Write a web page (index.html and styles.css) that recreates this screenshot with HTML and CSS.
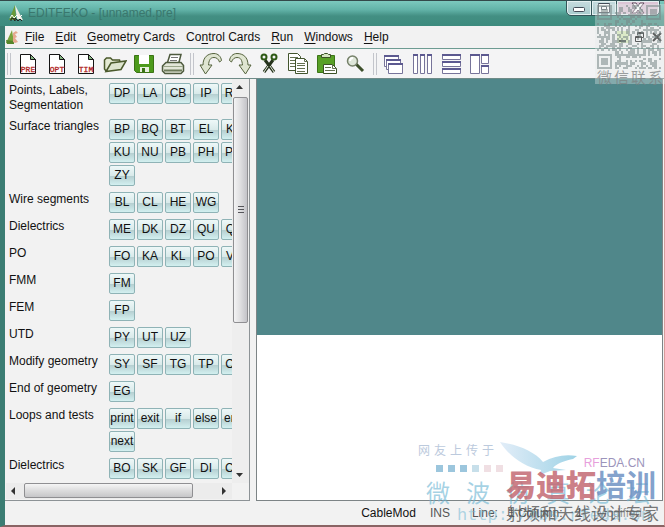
FILE: index.html
```html
<!DOCTYPE html>
<html lang="en">
<head>
<meta charset="utf-8">
<title>EDITFEKO - [unnamed.pre]</title>
<link rel="stylesheet" href="styles.css">
</head>
<body>
<div class="window">
  <header class="titlebar">
    <svg class="app-icon" width="16" height="17" viewBox="0 0 16 17"><path d="M7 0 1 15h7z" fill="#6b9a38"/><path d="M7 0l2 14 6 1z" fill="#f2eee4"/><path d="M2 13l2-3 2 3 3-3 2 3 3-3" fill="none" stroke="#fff"/><path d="M3 16v-2l2-1 2 3v-3l3 3 2-2 2 2" fill="none" stroke="#222"/></svg>
    <span class="caption">EDITFEKO - [unnamed.pre]</span>
    <div class="caption-buttons">
      <button class="cap" aria-label="Minimize"><svg width="14" height="10"><rect x="1.500" y="4.500" width="11" height="4" rx="1" fill="#fff" stroke="#444c58"/></svg></button>
      <button class="cap" aria-label="Maximize"><svg width="14" height="12"><path d="M1.500 1.500h11v9h-11zM4.500 4.500h5v3h-5z" fill="#fff" stroke="#444c58"/></svg></button>
      <button class="cap cap-close" aria-label="Close"><svg width="16" height="12"><path d="M2 1h4l2 3 2-3h4l-4 5 4 5h-4L8 8l-2 3H2l4-5z" fill="#fff" stroke="#5c4a5c"/></svg></button>
    </div>
  </header>
  <nav class="menubar">
    <svg class="doc-icon" width="14" height="15" viewBox="0 0 14 15"><path d="M6 0 0 13h8z" fill="#79a33c"/><path d="M0 10l8 1v3H1z" fill="#55852b"/><path d="M7 3l3-2 2 2-3 1 2 3-2 1 3 4-3 1-2-1z" fill="#e5a98f"/></svg>
    <button class="menu"><u>F</u>ile</button>
    <button class="menu"><u>E</u>dit</button>
    <button class="menu"><u>G</u>eometry Cards</button>
    <button class="menu">Co<u>n</u>trol Cards</button>
    <button class="menu"><u>R</u>un</button>
    <button class="menu"><u>W</u>indows</button>
    <button class="menu"><u>H</u>elp</button>
    <div class="doc-buttons">
      <button class="doc-btn min" aria-label="Minimize document"><svg width="12" height="12"><path d="M2 9h7v2H2z" fill="#253020"/></svg></button>
      <button class="doc-btn" aria-label="Restore document"><svg width="12" height="12"><path d="M3.500 4V1.500h6v5H8M3 2.500h7M1.500 5.500h6v5h-6zM1 6.500h7" fill="none" stroke="#111"/></svg></button>
      <button class="doc-btn" aria-label="Close document"><svg width="12" height="12"><path d="M2 2l8 8M10 2l-8 8" stroke="#111" stroke-width="2"/></svg></button>
    </div>
  </nav>
  <div class="toolbar">
    <i class="grip"></i>
    <button class="tool" aria-label="Open PRE"><svg width="24" height="24"><path d="M4.500 2.500h10l5 5v14h-15z" fill="#fff" stroke="#151515"/><path d="M14.500 2.500v5h5z" fill="#87b883" stroke="#151515"/><text x="12" y="20" class="file-text">PRE</text></svg></button>
    <button class="tool" aria-label="Open OPT"><svg width="24" height="24"><path d="M4.500 2.500h10l5 5v14h-15z" fill="#fff" stroke="#151515"/><path d="M14.500 2.500v5h5z" fill="#87b883" stroke="#151515"/><text x="12" y="20" class="file-text">OPT</text></svg></button>
    <button class="tool" aria-label="Open TIM"><svg width="24" height="24"><path d="M4.500 2.500h10l5 5v14h-15z" fill="#fff" stroke="#151515"/><path d="M14.500 2.500v5h5z" fill="#87b883" stroke="#151515"/><text x="12" y="20" class="file-text">TIM</text></svg></button>
    <button class="tool" aria-label="Open"><svg width="24" height="24"><path d="M3 19L1.500 17V8l2-2h4l2 2h7l1 3" fill="#e4ead3" stroke="#4b5a2c" stroke-width="1.500"/><path d="M3 19.500L8 11l15-2-5 8.500z" fill="#dde4ce" stroke="#4b5a2c" stroke-width="1.500"/></svg></button>
    <button class="tool" aria-label="Save"><svg width="24" height="24"><path d="M2.500 3.500h19v17h-17l-2-2z" fill="#4d9a1c" stroke="#3b7315"/><path d="M7 3h10v9H7z" fill="#fff"/><path d="M8 15h9v5H8z" fill="#e8efe0"/><path d="M10 16h3v4h-3z" fill="#3b7315"/></svg></button>
    <button class="tool" aria-label="Print"><svg width="24" height="24"><path d="M6 12L9 2.500h11L17.500 12" fill="#fff" stroke="#4e5a3e" stroke-width="1.500"/><path d="M10 5.500h7M9 8.500h7" stroke="#777" /><path d="M1.500 14L5 10.500h15l2.500 3V19L20 21.500H4L1.500 19z" fill="#e2e6d8" stroke="#4e5a3e" stroke-width="1.500"/><path d="M2 14.500h20" stroke="#9aa68a"/><path d="M3 18.500h18" stroke="#6c7a5a" stroke-width="2"/></svg></button>
    <i class="grip"></i>
    <button class="tool" aria-label="Undo"><svg width="24" height="24"><path d="M4 13C4 5 9 1.500 15 1.500c4 0 7 3 7.500 7l-2 1.500c-1-3-3-4.500-5.500-4.500-4 0-5 3-5.500 7.500h3.500L6.500 22 1 13z" fill="#dfe5d1" stroke="#55633d"/></svg></button>
    <button class="tool" aria-label="Redo"><svg width="24" height="24"><path d="M20 13C20 5 15 1.500 9 1.500c-4 0-7 3-7.500 7l2 1.500c1-3 3-4.500 5.500-4.500 4 0 5 3 5.500 7.500H11L17.500 22 23 13z" fill="#dfe5d1" stroke="#55633d"/></svg></button>
    <button class="tool" aria-label="Cut"><svg width="24" height="24"><path d="M8 8l9 12M16 8L7 20" stroke="#26331c" stroke-width="3"/><path d="M13 14l4 6M11 14l-4 6" stroke="#e8eee0" /><circle cx="7" cy="5" r="2.500" fill="none" stroke="#2f5a17" stroke-width="2"/><circle cx="17" cy="5" r="2.500" fill="none" stroke="#2f5a17" stroke-width="2"/></svg></button>
    <button class="tool" aria-label="Copy"><svg width="24" height="24"><path d="M2.500 1.500h9l3 3v14h-12z" fill="#fff" stroke="#43552e"/><path d="M4 5.500h8M4 8.500h8M4 11.500h8M4 14.500h8" stroke="#63704f"/><path d="M9.500 6.500h9l3 3v12h-12z" fill="#fff" stroke="#43552e"/><path d="M18.500 6.500v3h3M11 11.500h8M11 13.500h8M11 16.500h8M11 19.500h8" fill="none" stroke="#63704f"/></svg></button>
    <button class="tool" aria-label="Paste"><svg width="24" height="24"><path d="M2.500 3.500h17v17h-17z" fill="#58a026" stroke="#3c7417"/><path d="M6.500 5.500v-3h2l1-1h3l1 1h2v3z" fill="#d5e6c2" stroke="#3c5226"/><path d="M8.500 12.500h9l4 4v5h-13z" fill="#fff" stroke="#3c5226"/><path d="M17.500 12.500v4h4M10 15.500h6M10 18.500h10" fill="none" stroke="#63704f"/></svg></button>
    <button class="tool" aria-label="Find"><svg width="24" height="24"><path d="M12 12l7 7" stroke="#3d4f2b" stroke-width="3"/><circle cx="8.500" cy="9" r="5" fill="#dfe7da" stroke="#76816a" stroke-width="1.500"/><path d="M6 9a3 3 0 0 1 3-3" fill="none" stroke="#fff" stroke-width="2"/></svg></button>
    <i class="grip"></i>
    <button class="tool" aria-label="Cascade"><svg width="24" height="24"><g fill="#fff" stroke="#77749a"><path d="M2.500 3.500h14v11h-14z"/><path d="M4.500 7.500h14v10h-14z"/><path d="M6.500 12.500h14v9h-14z"/></g><path d="M2 4h15M4 8h15M6 12h15" stroke="#5c5990" stroke-width="2"/></svg></button>
    <button class="tool" aria-label="Tile columns"><svg width="24" height="24"><path d="M2.500 3.500h4v18h-4zM9.500 3.500h4v18h-4zM16.500 3.500h4v18h-4z" fill="#fff" stroke="#77749a"/><path d="M2 3h5M9 3h5M16 3h5" stroke="#5c5990" stroke-width="2"/></svg></button>
    <button class="tool" aria-label="Tile rows"><svg width="24" height="24"><path d="M2.500 3.500h18v4h-18zM2.500 10.500h18v4h-18zM2.500 17.500h18v4h-18z" fill="#fff" stroke="#77749a"/><path d="M2 3h19M2 10h19M2 17h19" stroke="#5c5990" stroke-width="2"/></svg></button>
    <button class="tool" aria-label="Tile"><svg width="24" height="24"><path d="M1.500 3.500h9v18h-9zM12.500 3.500h7v8h-7zM12.500 14.500h7v7h-7z" fill="#fff" stroke="#77749a"/><path d="M1 3h10M12 3h8M12 14h8" stroke="#5c5990" stroke-width="2"/></svg></button>
  </div>
  <main class="workspace">
    <aside class="panel">
      <div class="cards">
        <section class="row"><h2>Points, Labels, Segmentation</h2><div class="keys"><button>DP</button><button>LA</button><button>CB</button><button>IP</button><button>RM</button></div></section>
        <section class="row"><h2>Surface triangles</h2><div class="keys"><button>BP</button><button>BQ</button><button>BT</button><button>EL</button><button>KK</button><button>KU</button><button>NU</button><button>PB</button><button>PH</button><button>PM</button><button>ZY</button></div></section>
        <section class="row"><h2>Wire segments</h2><div class="keys"><button>BL</button><button>CL</button><button>HE</button><button>WG</button></div></section>
        <section class="row"><h2>Dielectrics</h2><div class="keys"><button>ME</button><button>DK</button><button>DZ</button><button>QU</button><button>QT</button></div></section>
        <section class="row"><h2>PO</h2><div class="keys"><button>FO</button><button>KA</button><button>KL</button><button>PO</button><button>VS</button></div></section>
        <section class="row"><h2>FMM</h2><div class="keys"><button>FM</button></div></section>
        <section class="row"><h2>FEM</h2><div class="keys"><button>FP</button></div></section>
        <section class="row"><h2>UTD</h2><div class="keys"><button>PY</button><button>UT</button><button>UZ</button></div></section>
        <section class="row"><h2>Modify geometry</h2><div class="keys"><button>SY</button><button>SF</button><button>TG</button><button>TP</button><button>CN</button></div></section>
        <section class="row"><h2>End of geometry</h2><div class="keys"><button>EG</button></div></section>
        <section class="row"><h2>Loops and tests</h2><div class="keys"><button>print</button><button>exit</button><button>if</button><button>else</button><button>end</button><button>next</button></div></section>
        <section class="row"><h2>Dielectrics</h2><div class="keys"><button>BO</button><button>SK</button><button>GF</button><button>DI</button><button>CO</button></div></section>
      </div>
      <div class="vbar">
        <svg width="16" height="16"><path d="M4 10h7L7.500 6z" fill="#333"/></svg>
        <div class="vtrack"><div class="vthumb"><i></i><i></i><i></i></div></div>
        <svg width="16" height="16"><path d="M4 6h7L7.500 10z" fill="#333"/></svg>
      </div>
      <div class="hbar">
        <svg width="16" height="16"><path d="M9 4v8L5 8z" fill="#333"/></svg>
        <div class="htrack"><div class="hthumb"></div></div>
        <svg width="16" height="16"><path d="M6 4v8l4-4z" fill="#333"/></svg>
      </div>
    </aside>
    <section class="editor">
      <div class="mdi"></div>
      <div class="output"></div>
    </section>
  </main>
  <footer class="status">
    <span>CableMod</span><span class="faded">INS</span><span class="faded pos">Line: &nbsp; 1 Column: &nbsp; &nbsp;1</span><span class="modified">Modified</span>
  </footer>
</div>

<div class="qr-mark">
  <svg id="qr" width="64" height="64" viewBox="0 0 29 29" shape-rendering="crispEdges"></svg>
  <div class="spread"><span>微</span><span>信</span><span>联</span><span>系</span></div>
</div>
<div class="brand-mark">
  <svg class="bird" width="84" height="34" viewBox="0 0 84 34"><defs><linearGradient id="wing"><stop offset="0" stop-color="#e2edf8"/><stop offset="1" stop-color="#9fd3e6"/></linearGradient></defs><path d="M0 0c18 3 34 9 43 20 11-6 22-8 34-6l-4 3c-10 2-17 5-20 9l13 2-16 1-10 4 1-5C24 25 9 14 0 0z" fill="url(#wing)"/></svg>
  <div class="upload spread"><span>网</span><span>友</span><span>上</span><span>传</span><span>于</span></div>
  <div class="squares"><i></i><i></i><i></i><i></i><i></i><i></i></div>
  <div class="rfeda"><span>RF</span>EDA.CN</div>
  <div class="script spread"><span>微</span><span>波</span><span>仿</span><span>真</span><span>论</span><span>坛</span></div>
  <div class="url">http://bbs.rfeda.cn</div>
  <div class="train"><b>易迪拓</b>培训</div>
  <div class="slogan">射频和天线设计专家</div>
</div>
<script src="qr.js"></script>
</body>
</html>
```
FILE: styles.css
```css
* { box-sizing: border-box; }
body {
  margin: 0;
  height: 100vh;
  position: relative;
  overflow: hidden;
  font: 12px/15px "Liberation Sans", Arial, sans-serif;
  color: #111;
}
button { font: inherit; color: inherit; border: 0; padding: 0; background: none; }
svg { display: block; flex: none; }
.window {
  height: 100%;
  display: flex;
  flex-direction: column;
  background: #f2f2f2;
  border-left: 5px solid #3b7d73;
  border-right: 1px solid #d99a9a;
  border-bottom: 2px solid #8a6464;
}
.titlebar {
  height: 26px;
  flex: none;
  display: flex;
  align-items: flex-start;
  margin-left: -5px;
  padding: 4px 4px 0 8px;
  gap: 4px;
  border-top: 1px solid #33494a;
  background: linear-gradient(#7cc9be, #62b3a8 35%, #438f83 60%, #3d8b7e);
}
.caption { color: #3a776d; padding-top: 1px; }
.caption-buttons { margin: -5px 0 0 auto; display: flex; }
.cap {
  width: 26px;
  height: 16px;
  display: grid;
  place-items: center;
  border: 1px solid #34565a;
  margin-left: -1px;
  background: linear-gradient(#c7dcdf, #a7cbcd);
  box-shadow: inset 0 0 0 1px #e4f1f1;
}
.cap:first-child { border-radius: 0 0 0 5px; }
.cap-close { width: 44px; border-radius: 0 0 5px 0; background: #dcc5d6; }
.menubar {
  height: 23px;
  flex: none;
  display: flex;
  align-items: center;
  padding: 0 1px;
  gap: 11px;
  border-bottom: 1px solid #6d9c92;
}
.doc-icon { margin-right: -6px; }
.menu { white-space: nowrap; }
.menu u { text-underline-offset: 2px; }
.doc-buttons { margin-left: auto; display: flex; gap: 5px; }
.doc-btn.min { background: #d5e8b4; }
.toolbar {
  height: 30px;
  flex: none;
  display: flex;
  align-items: center;
  gap: 5px;
  padding-left: 2px;
  background: #f4f4f5;
  border-bottom: 1px solid #6f8b88;
}
.grip { width: 4px; height: 22px; border: solid #c3c5cb; border-width: 0 1px; flex: none; }
.tool { width: 24px; height: 24px; flex: none; }
.file-text { font: 8px "Liberation Mono", monospace; fill: #b01f1f; stroke: #b01f1f; stroke-width: 0.3px; text-anchor: middle; }
.workspace { flex: 1; min-height: 0; display: flex; gap: 6px; }
.panel {
  flex: none;
  width: 245px;
  display: grid;
  grid-template-columns: 1fr 17px;
  grid-template-rows: 1fr 16px;
  border: solid #8d9396;
  border-width: 0 1px 1px 0;
  padding: 0 0 1px 1px;
}
.cards { overflow: hidden; min-height: 0; padding: 4px 0 0 3px; }
.row { display: flex; margin-bottom: 6px; }
.row h2 { font: inherit; margin: 0; width: 100px; flex: none; }
.keys { display: grid; grid-template-columns: repeat(5, 26px); gap: 2px; flex: none; align-content: start; }
.keys button {
  height: 21px;
  border: 1px solid #8fb3b6;
  border-radius: 2px;
  background: linear-gradient(#eef8f8, #d9eaea 50%, #b6cfd1 54%, #d3f0f0);
  white-space: nowrap;
  display: flex;
  align-items: center;
  justify-content: center;
}
.vbar { display: flex; flex-direction: column; background: #eeeeee; }
.vtrack { flex: 1; padding: 2px 1px 0; }
.vthumb {
  height: 61%;
  border: 1px solid #8f8f92;
  border-radius: 2px;
  background: linear-gradient(90deg, #f3f3f4, #dedee0 50%, #c3c3c8);
  display: flex;
  flex-direction: column;
  align-items: center;
  justify-content: center;
  gap: 2px;
}
.vthumb i { width: 6px; height: 1px; background: #55555a; }
.hbar { display: flex; background: #ececec; }
.htrack { flex: 1; padding-left: 2px; }
.hthumb {
  height: 15px;
  width: 80%;
  border: 1px solid #8f8f92;
  border-radius: 2px;
  background: linear-gradient(#f5f5f5, #dcdcdd 50%, #c6c6c8);
}
.hthumb { width: 88%; }
.editor {
  flex: 1;
  display: flex;
  flex-direction: column;
  border: solid #7d8486;
  border-width: 0 1px 1px 1px;
  margin-right: 1px;
}
.mdi { flex: 257; background: #50878a; }
.output { flex: 166; background: #fff; }
.status {
  height: 24px;
  flex: none;
  display: flex;
  align-items: center;
  gap: 14px;
  justify-content: flex-end;
  padding-right: 22px;
  white-space: nowrap;
}
.faded { color: #555; }
.pos { margin-left: 8px; }
.modified { color: #999; }

.spread { display: flex; white-space: nowrap; }
.qr-mark {
  position: absolute;
  top: 4px;
  right: 0;
  width: 70px;
  height: 80px;
  padding: 1px 2px;
  background: rgb(230 235 235 / 35%);
  color: rgb(125 130 130 / 75%);
  font: 15px/15px "Noto Sans CJK SC", sans-serif;
  pointer-events: none;
}
.qr-mark svg { fill: rgb(120 135 135 / 55%); }
.qr-mark .spread { gap: 2px; }
.brand-mark {
  position: absolute;
  right: 0;
  bottom: 0;
  width: 247px;
  height: 90px;
  white-space: nowrap;
  pointer-events: none;
}
.brand-mark > * { position: absolute; }
.bird { left: 82px; top: 5px; }
.upload { left: 0; top: 4px; gap: 4px; font: 12px/18px "Noto Sans CJK SC", sans-serif; color: #bccadd; }
.squares { left: 18px; top: 28px; display: flex; gap: 5px; }
.squares i { width: 7px; height: 7px; background: #9cc6dd; }
.squares i:nth-child(n+4) { background: #c7dfea; }
.squares i:nth-child(n+5) { background: #f0dfe3; }
.rfeda { right: 20px; top: 18px; font: 12px/16px "Liberation Sans", sans-serif; color: #9c94bb; }
.rfeda span { color: #e79fdc; }
.script { left: 8px; top: 40px; gap: 16px; font: 24px/30px "Noto Sans CJK SC", sans-serif; color: rgb(105 180 210 / 60%); }
.url { left: 39px; top: 69px; font: 17px/20px "Liberation Mono", monospace; color: rgb(115 185 210 / 55%); }
.train { right: 9px; top: 28px; font: bold 30px/36px "Noto Sans CJK SC", sans-serif; color: rgb(110 145 195 / 85%); }
.train b { color: rgb(195 105 115 / 85%); }
.slogan { right: 6px; top: 65px; font: 17px/22px "Noto Sans CJK SC", sans-serif; color: rgb(85 85 85 / 80%); }
```
FILE: qr.js
```js
const size = 29;
const finder = (x, y) => Math.max(Math.abs(x - 3), Math.abs(y - 3));
let seed = 17;
let path = "";
for (let y = 0; y < size; y++) {
  for (let x = 0; x < size; x++) {
    seed = (seed * 1103515245 + 12345) % 2147483648;
    let on = (seed >> 12) % 2 === 0;
    for (const [cx, cy] of [[0, 0], [size - 7, 0], [0, size - 7]]) {
      const d = finder(x - cx, y - cy);
      if (d <= 4) on = d === 3 || d <= 1;
    }
    if (on) path += `M${x} ${y}h1v1h-1z`;
  }
}
const shape = document.createElementNS("http://www.w3.org/2000/svg", "path");
shape.setAttribute("d", path);
document.getElementById("qr").append(shape);
```
